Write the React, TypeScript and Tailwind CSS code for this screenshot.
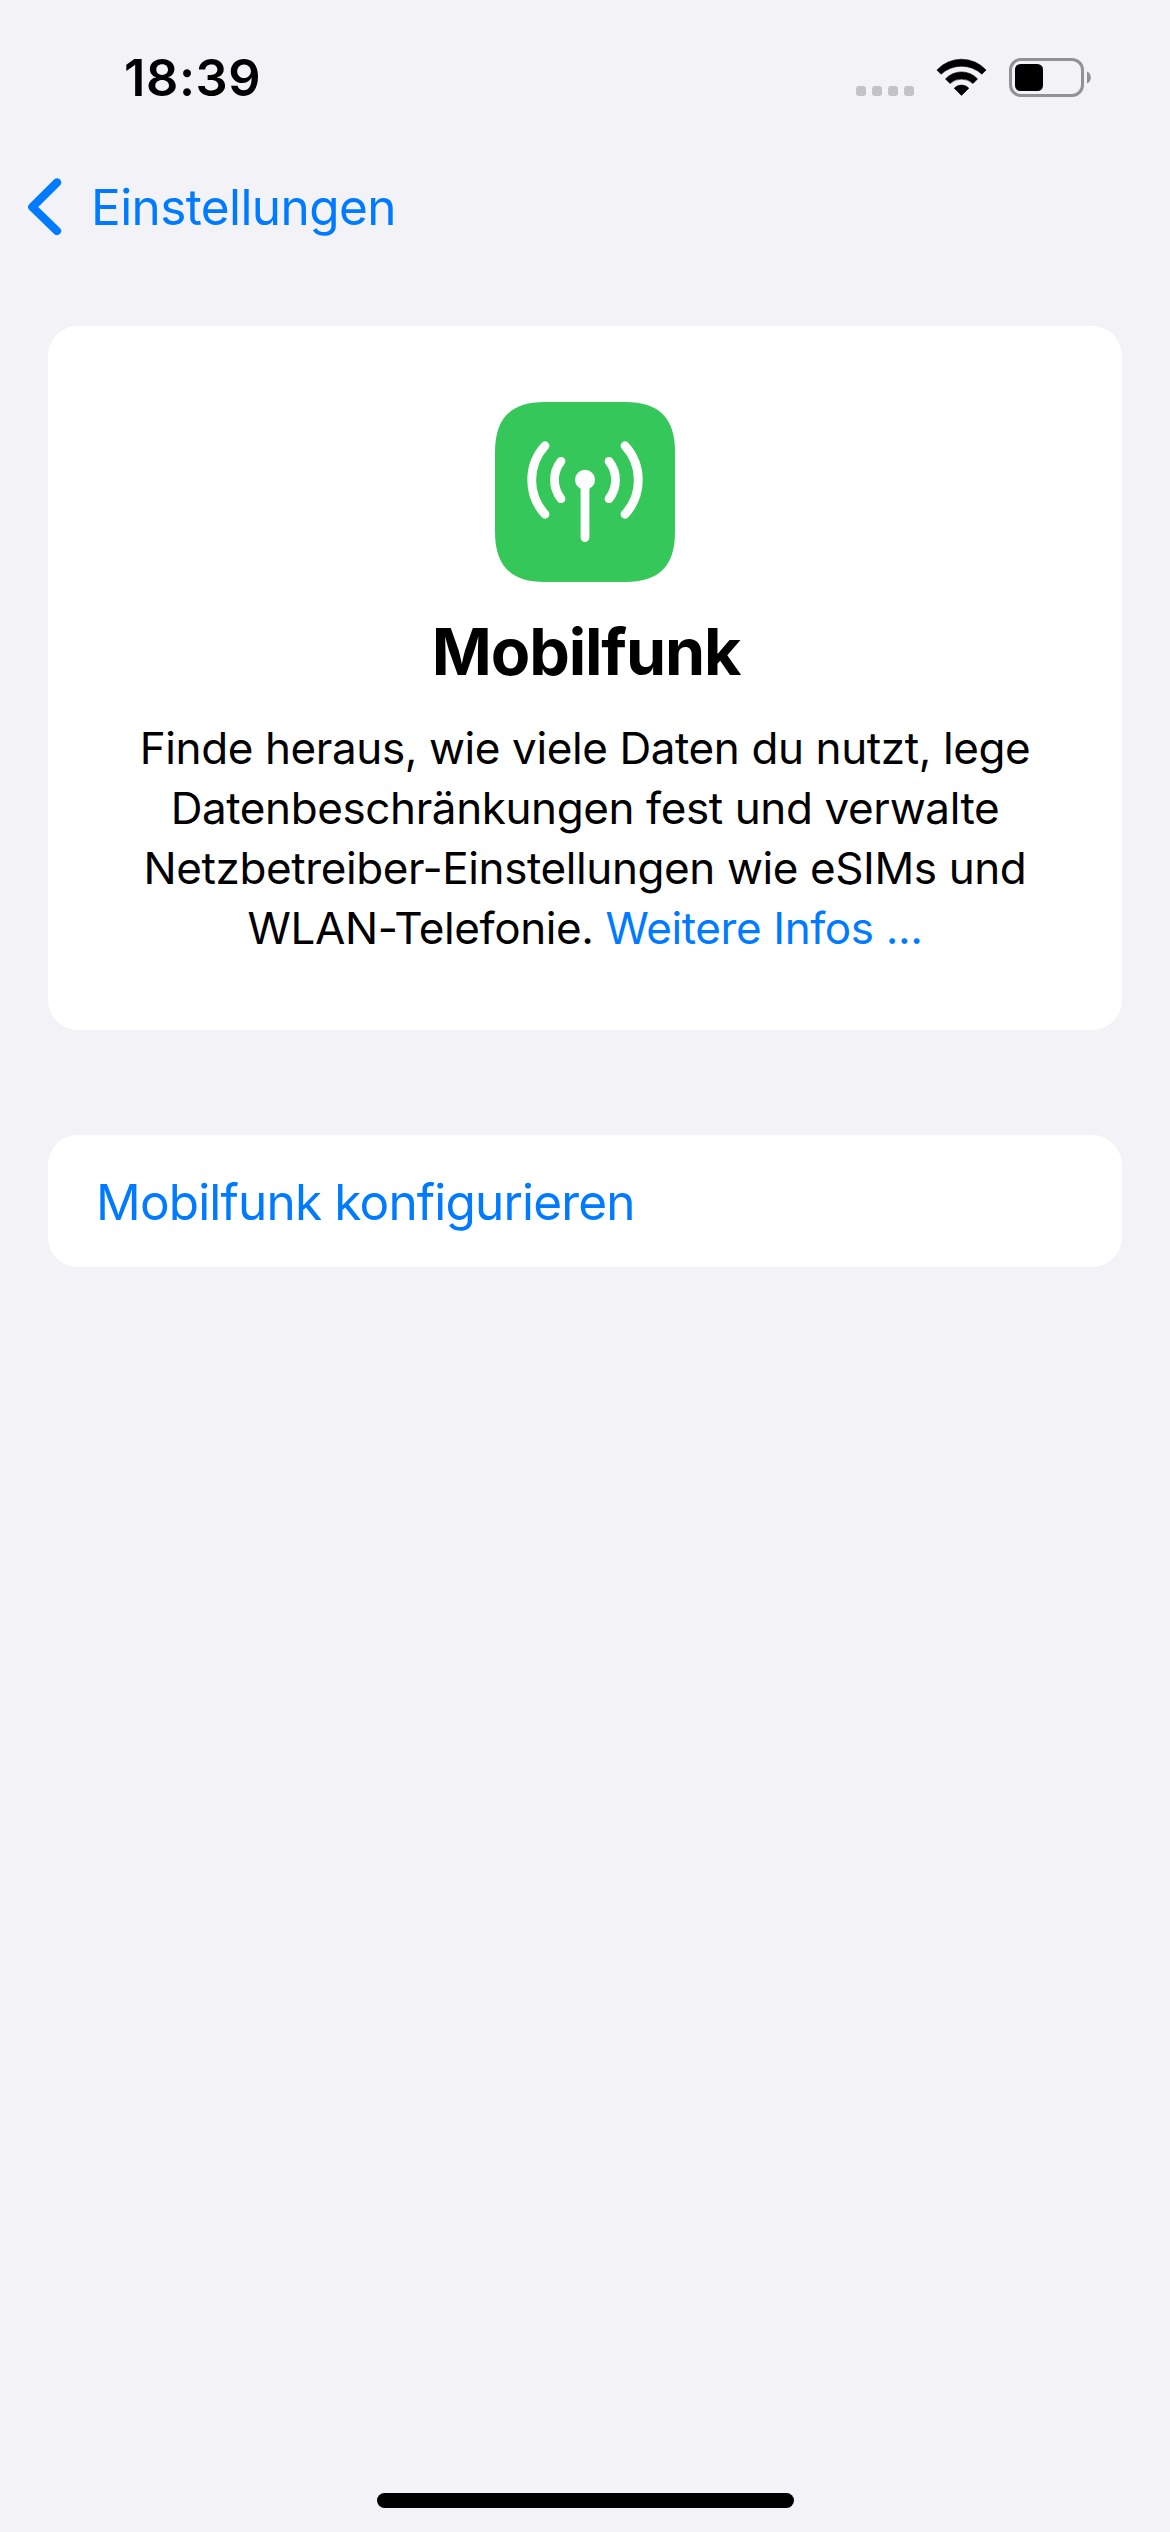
import type { ReactNode } from "react"

const fontStack = "font-['Inter','Liberation_Sans',sans-serif]"

function SignalDots() {
  return (
    <div className="mt-[28px] flex gap-[6px]">
      {[0, 1, 2, 3].map((dot) => (
        <span key={dot} className="h-[10px] w-[10px] rounded-[3px] bg-[#c3c2c7]" />
      ))}
    </div>
  )
}

function WifiIcon() {
  return (
    <svg width="51" height="39" viewBox="0 0 51 39" fill="#000" stroke="#000" strokeWidth="0.6" strokeLinejoin="round">
      <path d="M0.9 12 A33.5 33.5 0 0 1 50.1 12 L45.9 16.2 A30 30 0 0 0 5.1 16.2 Z" />
      <path d="M9.5 20.9 A21.8 21.8 0 0 1 41.5 20.9 L37 25.5 A17.2 17.2 0 0 0 14 25.5 Z" />
      <path d="M18.2 30.2 A10 10 0 0 1 32.8 30.2 L25.5 37.5 Z" />
    </svg>
  )
}

function BatteryIcon() {
  return (
    <svg width="83" height="39" viewBox="0 0 83 39">
      <rect x="1.5" y="1.5" width="72" height="36" rx="10.5" fill="none" stroke="#929195" strokeWidth="3" />
      <rect x="6" y="6" width="28" height="27" rx="5.5" fill="#000" />
      <path d="M78 13.4 A6.8 6.8 0 0 1 78 25.6 Z" fill="#929195" />
    </svg>
  )
}

function StatusBar() {
  return (
    <header className="flex h-[154px] items-start justify-between pt-[58px] pr-[78px] pl-[124px]">
      <span className="text-[50.5px] leading-[40px] font-semibold tracking-[0.6px]">18:39</span>
      <div className="flex items-start">
        <SignalDots />
        <div className="ml-[22px]">
          <WifiIcon />
        </div>
        <div className="ml-[22px]">
          <BatteryIcon />
        </div>
      </div>
    </header>
  )
}

function NavBar() {
  return (
    <nav className="flex h-[172px] items-start pt-[23px] pl-[28px] text-[#007aff]">
      <svg width="34" height="60" viewBox="0 0 34 60" fill="none" stroke="currentColor" strokeWidth="8.2" strokeLinecap="round" strokeLinejoin="round">
        <path d="M29 5.5 L4.3 30 L29 54" />
      </svg>
      <span className="ml-[29px] text-[49.5px] leading-[60px] tracking-[-0.6px]">Einstellungen</span>
    </nav>
  )
}

function AntennaIcon() {
  return (
    <svg width="180" height="180" viewBox="0 0 180 180" fill="none">
      <path
        d="M50 0 H130 C164 0 180 16 180 50 V130 C180 164 164 180 130 180 H50 C16 180 0 164 0 130 V50 C0 16 16 0 50 0 Z"
        fill="#35c759"
      />
      <circle cx="90" cy="77.7" r="10" fill="#fff" />
      <g stroke="#fff" strokeWidth="8.8" strokeLinecap="round">
        <path d="M90 78 V135.6" />
        <path d="M66 59.3 A30.1 30.1 0 0 0 66 96.7" />
        <path d="M114 59.3 A30.1 30.1 0 0 1 114 96.7" />
        <path d="M50 43.7 A50.9 50.9 0 0 0 50 112.3" />
        <path d="M130 43.7 A50.9 50.9 0 0 1 130 112.3" />
      </g>
    </svg>
  )
}

function Card({ className, children }: { className: string; children: ReactNode }) {
  return <section className={`mx-[48px] rounded-[30px] bg-white ${className}`}>{children}</section>
}

export default function App() {
  return (
    <div className={`flex h-[2532px] w-[1170px] flex-col overflow-hidden bg-[#f2f2f7] text-black ${fontStack}`}>
      <StatusBar />
      <NavBar />

      <Card className="flex h-[704px] flex-col items-center pt-[76px]">
        <AntennaIcon />
        <h1 className="mt-[30px] ml-[2px] text-[64.5px] leading-[80px] font-bold tracking-[-1.15px]">Mobilfunk</h1>
        <p className="mt-[26px] text-center text-[44px] leading-[60px] tracking-[-0.4px] whitespace-nowrap">
          <span className="block">Finde heraus, wie viele Daten du nutzt, lege</span>
          <span className="block">Datenbeschränkungen fest und verwalte</span>
          <span className="block">Netzbetreiber-Einstellungen wie eSIMs und</span>
          <span className="block">
            WLAN-Telefonie. <a className="text-[#007aff]">Weitere Infos ...</a>
          </span>
        </p>
      </Card>

      <Card className="mt-[105px] flex h-[132px] items-center pt-[2px] pl-[48px]">
        <button className="text-[49.5px] leading-[60px] tracking-[-0.83px] text-[#007aff]">Mobilfunk konfigurieren</button>
      </Card>

      <footer className="mt-auto flex justify-center pb-[24px]">
        <div className="h-[15px] w-[417px] rounded-full bg-black" />
      </footer>
    </div>
  )
}
